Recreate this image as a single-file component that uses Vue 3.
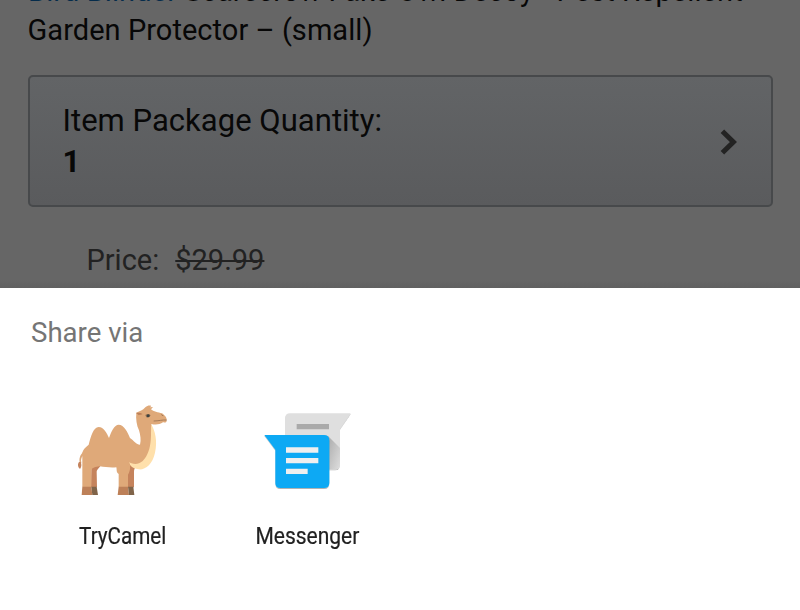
<script setup>
const apps = [
  { id: 'camel', label: 'TryCamel' },
  { id: 'messenger', label: 'Messenger' },
]
</script>

<template>
  <div class="screen">
    <section class="page">
      <h1 class="title">
        <div class="line first"><span class="brand">Bird Blinder</span> Scarecrow Fake Owl Decoy - Pest Repellent</div>
        <div class="line second">Garden Protector – (small)</div>
      </h1>
      <div class="option">
        <div class="option-text">
          <div class="option-name">Item Package Quantity:</div>
          <div class="option-value">1</div>
        </div>
        <svg class="chevron" width="18" height="26" viewBox="0 0 18 26">
          <path d="M2.4 2.2 L13.4 13 L2.4 23.800" fill="none" stroke="#232323" stroke-width="5" />
        </svg>
      </div>
      <div class="price"><span class="price-label">Price:</span><s class="old">$29.99</s></div>
    </section>
    <section class="sheet">
      <h2 class="share">Share via</h2>
      <div class="apps">
        <div v-for="app in apps" :key="app.id" class="app">
          <svg v-if="app.id === 'camel'" class="icon" width="124" height="120" viewBox="3 0 372 360">
            <path d="M72 184C60 194 56 207 60 220L64 219C61 207 65 198 75 191Z" fill="#dda778" />
            <path d="M57 216C53 222 52 230 60 237C65 231 65 222 62 216Z" fill="#c5835c" />
            <path d="M94 225H122C119 235 111 237 110 245L111 292H93Z" fill="#c5835c" />
            <path d="M202 214H228C229 230 222 235 222 247V292H202Z" fill="#c5835c" />
            <path d="M271 99C286 119 293 155 285 188C278 222 256 240 237 238C221 237 211 229 205 217L239 207Z" fill="#ffe0ab" />
            <path d="M67 291V191C67 180 77 171 86 164C92 141 100 111 116 111C131 111 141 130 147 144C154 125 163 104 176 104C192 104 203 126 210 144C221 151 229 164 240 164C244 150 241 135 237 121C230 106 227 87 229 68C240 64 248 61 256 52C263 46 269 46 274 48L270 52L279 51L273 58C280 65 295 67 306 70C315 77 321 82 320 92C320 97 315 98 309 97C299 104 287 105 274 102C272 121 275 145 270 167C265 193 253 213 237 220C225 225 212 220 207 216C213 226 211 243 204 254V291H176V252C168 247 171 239 169 232C151 234 136 231 119 229C106 231 96 232 94 242V291Z" fill="#dfa979" />
            <path d="M228 69C234 67 242 69 248 72C244 75 239 73 237 76Z" fill="#bd8058" />
            <path d="M256 75Q265 68 272 76Q268 84 259 82Z" fill="#937254" />
            <circle cx="264.500" cy="77" r="4.500" fill="#3e4240" />
            <path d="M281 93C295 93 307 89 320 90M304 73Q305 77 310 77" fill="none" stroke="#98704f" stroke-width="2.500" />
            <path d="M67 290H94L97 315H65ZM176 290H204L207 315H173Z" fill="#bd8058" />
            <path d="M94 290H110L114 315H97ZM204 290H220L223 315H207Z" fill="#806449" />
          </svg>
          <svg v-else class="icon" width="124" height="120" viewBox="-1 0 372 360">
            <defs>
              <filter id="shade" x="-10%" y="-10%" width="125%" height="125%">
                <feDropShadow dx="0" dy="3" stdDeviation="2" flood-color="#000" flood-opacity="0.3" />
              </filter>
              <linearGradient id="fold" x1="0" y1="0" x2="1" y2="1">
                <stop offset="0" stop-color="#aaa" />
                <stop offset="1" stop-color="#dedede" />
              </linearGradient>
            </defs>
            <g transform="translate(14 30)">
              <path d="M121 40H302L270 86V193Q270 208 255 208H120Q105 208 105 193V56Q105 40 121 40Z" fill="#dfdfdf" filter="url(#shade)" />
              <path d="M234 108L270 144V193Q270 208 255 208H237Z" fill="url(#fold)" />
              <path d="M140 72H237V88H140Z" fill="#aaa" />
              <path d="M43 105H222Q238 105 238 121V248Q238 264 222 264H91Q76 264 76 248V149Z" fill="#0ca9f4" filter="url(#shade)" />
              <path d="M108 142H205V158H108ZM108 174H205V190H108ZM108 206H173V222H108Z" fill="#efefef" />
            </g>
          </svg>
          <div class="label" :class="app.id">{{ app.label }}</div>
        </div>
      </div>
    </section>
  </div>
</template>

<style>
body { margin: 0; background: #fff; }
</style>

<style scoped>
.screen { width: 800px; height: 610px; overflow: hidden; font-family: Roboto, sans-serif; background: #fff; display: flex; flex-direction: column; }
.page { box-sizing: border-box; height: 288px; flex: none; overflow: hidden; background: linear-gradient(#666 280px, #606060 288px); padding: 0 27px 0 28px; }
.title { margin: -28px 0 0; font-weight: 400; font-size: 29px; line-height: 39px; color: #070707; white-space: nowrap; }
.first { letter-spacing: 0.09px; }
.second { letter-spacing: 0.05px; margin-left: -0.5px; }
.brand { color: #052c4b; }
.option { box-sizing: border-box; width: 745px; height: 132px; margin-top: 25px; border: 2px solid #47494b; border-radius: 5px; background: linear-gradient(#626466, #5a5b5d); display: flex; align-items: center; justify-content: space-between; padding: 0 33px 0 32.5px; color: #080808; font-size: 31px; line-height: 41px; }
.option-name { letter-spacing: 0.03px; }
.option-value { font-weight: 700; }
.chevron { flex: none; margin-top: 2px; }
.price { margin: 33.5px 0 0 58.5px; display: flex; gap: 16px; font-size: 29px; line-height: 38px; color: #222; }
.old { text-decoration-thickness: 2px; }
.sheet { flex: 1; padding: 25px 31px 0; }
.share { margin: 0; font-weight: 400; font-size: 27.6px; line-height: 39px; color: #757575; }
.apps { display: flex; margin: 38px 0 0; }
.app { width: 184px; display: flex; flex-direction: column; align-items: center; }
.icon { display: block; }
.label { margin-top: 10px; font-size: 24px; line-height: 32px; color: #212121; transform: scaleX(0.875); -webkit-text-stroke: 0.2px #212121; }
.label.camel { transform: scaleX(0.86); }
</style>
